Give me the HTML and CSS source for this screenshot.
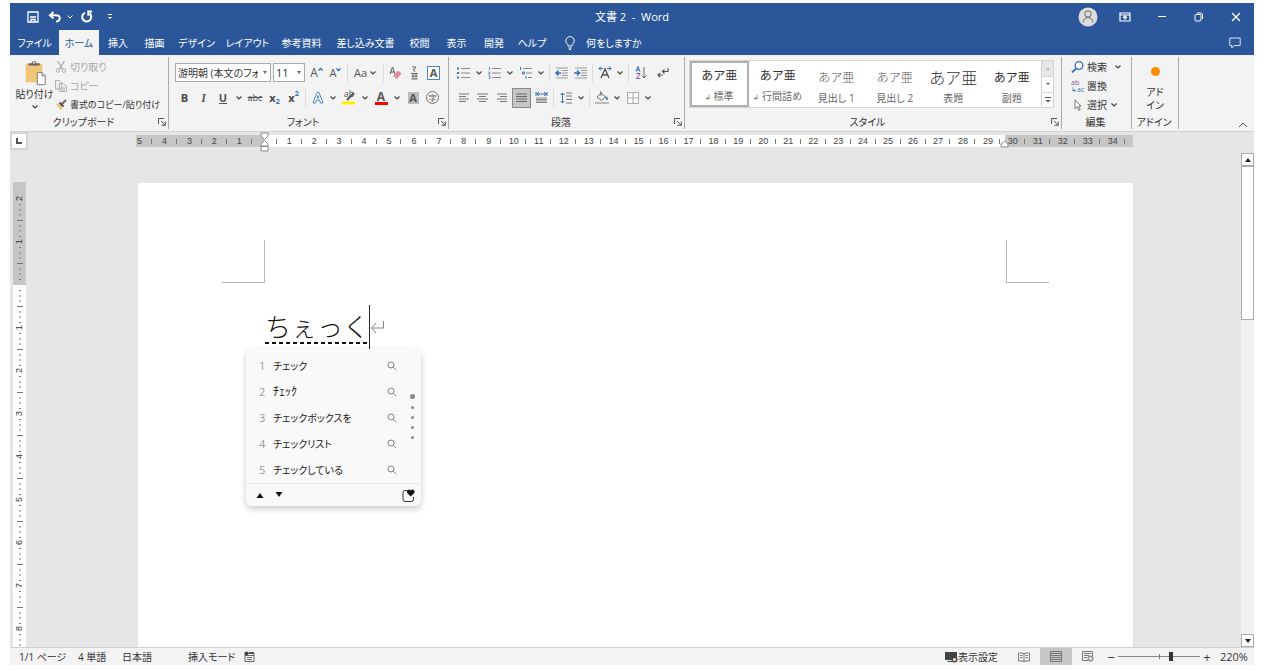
FILE: index.html
```html
<!DOCTYPE html>
<html lang="ja">
<head>
<meta charset="utf-8">
<meta name="viewport" content="width=device-width, initial-scale=1">
<title>文書 2 - Word</title>
<link rel="stylesheet" href="styles.css">
</head>
<body>
<svg class="defs" aria-hidden="true">
  <symbol id="chev" viewBox="0 0 8 8"><path d="M1.500 2.500 4 5l2.500-2.500" fill="none" stroke="#444" stroke-width="1.200"/></symbol>
  <symbol id="launch" viewBox="0 0 8 8"><path d="M.5 6V.5H6M3 3l4 4M7.300 3.500v3.800H3.500" fill="none" stroke="#555"/></symbol>
  <symbol id="mag" viewBox="0 0 10 10"><circle cx="4" cy="4" r="3" fill="none" stroke="#858585"/><path d="M6.200 6.200 9.300 9.300" stroke="#858585"/></symbol>
</svg>
<div class="window">
  <header class="titlebar">
    <div class="quick">
      <button aria-label="保存"><svg width="12" height="12" viewBox="0 0 12 12"><path d="M1 1h10v10H1z" fill="none" stroke="#fff" stroke-width="1.300"/><path d="M3 6h6M4 11V8.500h4V11" fill="none" stroke="#fff" stroke-width="1.300"/></svg></button>
      <button aria-label="元に戻す"><svg width="14" height="12" viewBox="0 0 14 12"><path d="M5.500 1 2 4.200l3.500 3.200M2.500 4.200H8c5 0 5 6.300 0 6.300" fill="none" stroke="#fff" stroke-width="2"/></svg></button>
      <button class="narrow" aria-label="元に戻す一覧"><svg width="8" height="8" viewBox="0 0 8 8"><path d="m1.500 2.500 2.500 2.500 2.500-2.500" fill="none" stroke="#fff"/></svg></button>
      <button class="redo" aria-label="繰り返し"><svg width="14" height="14" viewBox="0 0 14 14"><path d="M5 2.800A4.500 4.500 0 1 0 9.500 3.400M12 1.500H8.300v4.200" fill="none" stroke="#fff" stroke-width="2"/></svg></button>
      <button class="more" aria-label="クイック アクセス ツール バーのカスタマイズ"><svg width="6" height="6" viewBox="0 0 6 6"><path d="M1 .5h4" stroke="#fff"/><path d="M1 3h4L3 5z" fill="#fff"/></svg></button>
    </div>
    <h1 class="title">文書 2 &nbsp;-&nbsp; Word</h1>
    <div class="wincontrols">
      <button class="avatar" aria-label="アカウント"><svg width="20" height="20" viewBox="0 0 20 20"><circle cx="10" cy="10" r="9.500" fill="#dcdcdc"/><circle cx="10" cy="7" r="3.200" fill="none" stroke="#666"/><path d="M5 15.500c.5-6.500 9.500-6.500 10 0" fill="none" stroke="#666"/></svg></button>
      <button aria-label="リボンの表示オプション"><svg width="12" height="10" viewBox="0 0 12 10"><path d="M1 1h10v8H1zM1 3h10M6 8V4.500M4 6l2-2 2 2" fill="none" stroke="#fff" stroke-width="1.200"/></svg></button>
      <button aria-label="最小化"><svg width="10" height="10"><path d="M1 4.500h8" stroke="#fff"/></svg></button>
      <button aria-label="元のサイズに戻す"><svg width="10" height="10" viewBox="0 0 10 10"><rect x="1" y="2.500" width="6" height="6.500" rx="1" fill="none" stroke="#fff"/><path d="M3 1h3.500Q8.500 1 8.500 3v4" fill="none" stroke="#fff"/></svg></button>
      <button aria-label="閉じる"><svg width="10" height="10"><path d="m1 1 8 8M9 1 1 9" stroke="#fff" stroke-width="1.200"/></svg></button>
    </div>
  </header>
  <nav class="tabs">
    <div class="tablist">
      <button>ファイル</button><button class="active">ホーム</button><button>挿入</button><button>描画</button><button>デザイン</button><button>レイアウト</button><button>参考資料</button><button>差し込み文書</button><button>校閲</button><button>表示</button><button>開発</button><button>ヘルプ</button>
    </div>
    <button class="tell"><svg width="10" height="14" viewBox="0 0 10 14"><path d="M3.200 10c0-2-2.400-2.500-2.400-5.200a4.200 4.200 0 0 1 8.400 0C9.200 7.500 6.800 8 6.800 10zM3.300 12h3.400M4 13.500h2" fill="none" stroke="#fff"/></svg>何をしますか</button>
    <button class="comment" aria-label="コメント"><svg width="12" height="12" viewBox="0 0 12 12"><path d="M.8 1h10.400v7.500H5L2.800 11V8.500h-2z" fill="none" stroke="#d7e3f5"/></svg></button>
  </nav>

  <div class="ribbon">
    <section class="group clip">
      <div class="body clipbody">
        <button class="paste"><svg width="24" height="26" viewBox="0 0 24 28"><rect x="2" y="4" width="18" height="20" fill="#efc578"/><path d="M5 6V3.500h3.500Q9 1 11 1t2.500 2.500H17V6z" fill="#666"/><circle cx="11" cy="3" r="1" fill="#fff"/><path d="M14.500 13.500h5L23 17v9.500h-8.500z" fill="#fff" stroke="#777"/><path d="M19.500 13.500V17H23" fill="none" stroke="#777"/></svg><span>貼り付け</span><svg width="8" height="8"><use href="#chev"/></svg></button>
        <div class="stack">
          <button class="off"><svg width="12" height="12" viewBox="0 0 12 12"><path d="m2.500 0 5 8M9.500 0l-5 8" stroke="#aaa" stroke-width="1.300"/><circle cx="3" cy="9.500" r="1.800" fill="none" stroke="#aaa"/><circle cx="9" cy="9.500" r="1.800" fill="none" stroke="#aaa"/></svg>切り取り</button>
          <button class="off"><svg width="12" height="12" viewBox="0 0 12 12"><path d="M.5.500h4l2 2v6.500h-6zM4.500 3.500h4l3 3v5h-7z" fill="#eee" stroke="#b0b0b0"/><path d="M6 8h4M6 10h4" stroke="#b0b0b0"/></svg>コピー</button>
          <button class="long"><svg width="12" height="12" viewBox="0 0 12 12"><path d="m1 5 4-1 3 3-2 4.500z" fill="#efc578"/><path d="m4.500 3.500 4 4" stroke="#555" stroke-width="2"/><path d="m7 5 4-4" stroke="#666" stroke-width="2"/></svg>書式のコピー/貼り付け</button>
        </div>
      </div>
      <footer><span>クリップボード</span><button aria-label="クリップボードの詳細"><svg width="8" height="8"><use href="#launch"/></svg></button></footer>
    </section>

    <section class="group font">
      <div class="body">
        <div class="row">
          <label class="combo face"><select aria-label="フォント"><option>游明朝 (本文のフォント)</option></select><i></i></label>
          <label class="combo size"><select aria-label="フォント サイズ"><option>11</option></select><i></i></label>
          <button class="t big" aria-label="フォント サイズの拡大">A<svg width="5" height="12" viewBox="0 0 5 12"><path d="m.5 3.500 2-2 2 2" fill="none" stroke="#2f6db5" stroke-width="1.300"/></svg></button><button class="t" aria-label="フォント サイズの縮小">A<svg width="5" height="12" viewBox="0 0 5 12"><path d="m.5 1.500 2 2 2-2" fill="none" stroke="#2f6db5" stroke-width="1.300"/></svg></button><hr>
          <button class="t wide">Aa<svg width="8" height="8"><use href="#chev"/></svg></button><hr>
          <button aria-label="書式のクリア"><svg width="13" height="14" viewBox="0 0 13 14"><path d="m1 8 2.500-7L6 8M2 6h3" fill="none" stroke="#555"/><path d="m4 10 5-5.500 3.500 3L8 13z" fill="#e58a98"/></svg></button>
          <button aria-label="ルビ"><svg width="9" height="14" viewBox="0 0 9 14"><path d="M2 1h4L4 4M3 3l2 3M1 7.500h7M1.500 13h6M3 7.500V13M6 7.500V13M1.500 10h6" fill="none" stroke="#666"/></svg></button>
          <button class="t"><span class="boxed">A</span></button>
        </div>
        <div class="row">
          <button class="t b">B</button><button class="t it">I</button><button class="t un">U</button><button class="dd" aria-label="下線の種類"><svg width="8" height="8"><use href="#chev"/></svg></button>
          <button class="t strike">abc</button><button class="t b">x<sub>2</sub></button><button class="t b">x<sup>2</sup></button><hr>
          <button aria-label="文字の効果"><svg width="12" height="14" viewBox="0 0 12 14"><path d="M1 12 5 1.500h2L11 12H8.500l-1-3h-3l-1 3zM5.200 7h1.600L6 4.500z" fill="#fff" stroke="#4a86c8"/></svg></button><button class="dd" aria-label="文字の効果一覧"><svg width="8" height="8"><use href="#chev"/></svg></button>
          <button class="t mark" aria-label="蛍光ペン">ab<svg width="13" height="14" viewBox="0 0 13 14"><path d="m5 9 7-7" stroke="#555" stroke-width="2"/><path d="M0 10.500h13v3H0z" fill="#fff000"/></svg></button><button class="dd" aria-label="蛍光ペンの色"><svg width="8" height="8"><use href="#chev"/></svg></button>
          <button class="t roomy"><span class="red">A</span></button><button class="dd" aria-label="フォントの色"><svg width="8" height="8"><use href="#chev"/></svg></button>
          <button class="t roomy"><span class="shade">A</span></button><button class="t"><span class="ring">字</span></button>
        </div>
      </div>
      <footer><span>フォント</span><button aria-label="フォントの詳細"><svg width="8" height="8"><use href="#launch"/></svg></button></footer>
    </section>

    <section class="group para">
      <div class="body">
        <div class="row">
          <button aria-label="箇条書き"><svg width="13" height="12" viewBox="0 0 13 12"><path d="M4 1.500h9M4 6h9M4 10.500h9" stroke="#888"/><path d="M0 1.500h2M0 6h2M0 10.500h2" stroke="#3f74b5" stroke-width="2"/></svg></button><button class="dd" aria-label="箇条書き一覧"><svg width="8" height="8"><use href="#chev"/></svg></button>
          <button aria-label="段落番号"><svg width="13" height="12" viewBox="0 0 13 12"><path d="M4 1.500h9M4 6h9M4 10.500h9" stroke="#888"/><path d="M1.500 0v3M.5 5h1.500L.5 7H2.500M.5 9h1.500v3H.5" fill="none" stroke="#3f74b5" stroke-width=".8"/></svg></button><button class="dd" aria-label="段落番号一覧"><svg width="8" height="8"><use href="#chev"/></svg></button>
          <button aria-label="アウトライン"><svg width="13" height="12" viewBox="0 0 13 12"><path d="M4 1.500h9M7 6h6M9 10.500h4" stroke="#888"/><path d="M1.500 0v3M3.500 5h2v2h-2zM7 9v3" fill="none" stroke="#3f74b5"/></svg></button><button class="dd" aria-label="アウトライン一覧"><svg width="8" height="8"><use href="#chev"/></svg></button><hr>
          <button aria-label="インデントを減らす"><svg width="13" height="12" viewBox="0 0 13 12"><path d="M1 1h12M7 3.500h6M7 6h6M7 8.500h6M1 11h12" stroke="#999"/><path d="M6 6H1.500M3.500 3.500 1 6l2.500 2.500" fill="none" stroke="#2f6db5" stroke-width="1.500"/></svg></button>
          <button aria-label="インデントを増やす"><svg width="13" height="12" viewBox="0 0 13 12"><path d="M1 1h12M7 3.500h6M7 6h6M7 8.500h6M1 11h12" stroke="#999"/><path d="M0 6h5M3 3.500 5.500 6 3 8.500" fill="none" stroke="#2f6db5" stroke-width="1.500"/></svg></button><hr>
          <button aria-label="拡張書式"><svg width="14" height="13" viewBox="0 0 14 13"><path d="m3 12 4-9 4 9M4.500 9h5" fill="none" stroke="#555" stroke-width="1.400"/><path d="M1 2.500h4M3 .5l-2 2 2 2M9 2.500h4M11 .5l2 2-2 2" fill="none" stroke="#2f6db5"/></svg></button><button class="dd" aria-label="拡張書式一覧"><svg width="8" height="8"><use href="#chev"/></svg></button><hr>
          <button aria-label="並べ替え"><svg width="12" height="13" viewBox="0 0 12 13"><path d="m1 5.500 2-5 2 5M2 4h2" fill="none" stroke="#2f6db5"/><path d="M1.300 7.500h4l-4 5h4" fill="none" stroke="#8b52a8"/><path d="M9 1v11M6.800 9.500 9 12l2.200-2.500" fill="none" stroke="#666"/></svg></button>
          <button class="wide" aria-label="編集記号の表示"><svg width="12" height="12" viewBox="0 0 12 12"><path d="M11 1v3.500H6M7.500 2.500l-2 2 2 2M6 8H1.500M3 6 1 8l2 2" fill="none" stroke="#555" stroke-width="1.200"/></svg></button>
        </div>
        <div class="row">
          <button aria-label="左揃え"><svg width="11" height="10"><path d="M1 1h10M1 3.500h7M1 6h10M1 8.500h7" stroke="#777"/></svg></button>
          <button aria-label="中央揃え"><svg width="11" height="10"><path d="M0 1h11M2 3.500h7M0 6h11M2 8.500h7" stroke="#777"/></svg></button>
          <button class="roomy" aria-label="右揃え"><svg width="11" height="10"><path d="M0 1h10M3 3.500h7M0 6h10M3 8.500h7" stroke="#777"/></svg></button>
          <button class="on" aria-label="両端揃え"><svg width="11" height="10"><path d="M0 1h11M0 3.500h11M0 6h11M0 8.500h11" stroke="#666"/></svg></button>
          <button class="roomy" aria-label="均等割り付け"><svg width="13" height="13" viewBox="0 0 13 13"><path d="M1 1v4M12 1v4M1.500 3h10M4 1 1.800 3 4 5M9 1l2.200 2L9 5" fill="none" stroke="#2f6db5"/><path d="M1 7h11M1 8.500h11M1 10h11M1 11.500h11" stroke="#888"/></svg></button><hr>
          <button aria-label="行間"><svg width="12" height="12" viewBox="0 0 12 12"><path d="M6 1h6M6 4h6M6 7.500h6M6 11h6" stroke="#777"/><path d="M2.500 1v10M.5 3l2-2 2 2M.5 9l2 2 2-2" fill="none" stroke="#2f6db5"/></svg></button><button class="dd" aria-label="行間一覧"><svg width="8" height="8"><use href="#chev"/></svg></button><hr>
          <button aria-label="塗りつぶし"><svg width="14" height="13" viewBox="0 0 14 13"><path d="m2 6 4-4 4.500 4L6.500 9.500zM6 5V1q0-1-1-1" fill="#fff" stroke="#666"/><path d="M10.500 6q2 1 1.500 3" fill="none" stroke="#2f6db5" stroke-width="1.500"/><path d="M0 11h14v2H0z" fill="#bbb"/></svg></button><button class="dd" aria-label="塗りつぶしの色"><svg width="8" height="8"><use href="#chev"/></svg></button>
          <button aria-label="罫線"><svg width="12" height="12"><path d="M.5.500h11v11H.5zM6 1v10M1 6h10" fill="#fff" stroke="#aaa"/></svg></button><button class="dd" aria-label="罫線一覧"><svg width="8" height="8"><use href="#chev"/></svg></button>
        </div>
      </div>
      <footer><span>段落</span><button aria-label="段落の詳細"><svg width="8" height="8"><use href="#launch"/></svg></button></footer>
    </section>

    <section class="group styles">
      <div class="body">
        <div class="gallery">
          <button class="sel"><b>あア亜</b><span><small>↲</small> 標準</span></button>
          <button><b>あア亜</b><span><small>↲</small> 行間詰め</span></button>
          <button class="light"><b>あア亜</b><span>見出し 1</span></button>
          <button class="light"><b>あア亜</b><span>見出し 2</span></button>
          <button class="large"><b>あア亜</b><span>表題</span></button>
          <button><b>あア亜</b><span>副題</span></button>
          <div class="updown">
            <button class="dim" aria-label="上へ"><svg width="6" height="6"><path d="M1 4h4L3 2z" fill="#aaa"/></svg></button>
            <button aria-label="下へ"><svg width="6" height="6"><path d="M1 2h4L3 4z" fill="#555"/></svg></button>
            <button aria-label="その他"><svg width="8" height="8"><path d="M1 1.500h6" stroke="#555"/><path d="M1.500 4h5L4 6.500z" fill="#555"/></svg></button>
          </div>
        </div>
      </div>
      <footer><span>スタイル</span><button aria-label="スタイルの詳細"><svg width="8" height="8"><use href="#launch"/></svg></button></footer>
    </section>

    <section class="group edit">
      <div class="body stack">
        <button><svg width="13" height="12" viewBox="0 0 13 12"><circle cx="8" cy="4.500" r="3.800" fill="#fff" stroke="#2f6db5" stroke-width="1.300"/><path d="M5.300 7.300 1 11.500" stroke="#2f6db5" stroke-width="1.800"/></svg>検索<svg class="far" width="8" height="8"><use href="#chev"/></svg></button>
        <button><span class="abac"><em>ab</em><em>↳ac</em></span>置換</button>
        <button><svg width="13" height="12" viewBox="0 0 13 12"><path d="M4 .8v9l2-2 1.700 3.500 1.500-.8L7.600 7.200H10z" fill="#fff" stroke="#777"/></svg>選択<svg width="8" height="8"><use href="#chev"/></svg></button>
      </div>
      <footer><span>編集</span></footer>
    </section>

    <section class="group addin">
      <div class="body"><button><i class="dot"></i>アド<br>イン</button></div>
      <footer><span>アドイン</span></footer>
    </section>
    <div class="tail"><button aria-label="リボンを折りたたむ"><svg width="10" height="6"><path d="m1 5 4-4 4 4" fill="none" stroke="#555"/></svg></button></div>
  </div>

  <main class="work">
    <div class="toprow">
      <button class="tabstop" aria-label="左揃えタブ"><svg width="6" height="6"><path d="M1 0v5h5" fill="none" stroke="#555" stroke-width="2"/></svg></button>
      <div class="hruler">
        <span>5</span><span>4</span><span>3</span><span>2</span><span>1</span><span></span><span>1</span><span>2</span><span>3</span><span>4</span><span>5</span><span>6</span><span>7</span><span>8</span><span>9</span><span>10</span><span>11</span><span>12</span><span>13</span><span>14</span><span>15</span><span>16</span><span>17</span><span>18</span><span>19</span><span>20</span><span>21</span><span>22</span><span>23</span><span>24</span><span>25</span><span>26</span><span>27</span><span>28</span><span>29</span><span>30</span><span>31</span><span>32</span><span>33</span><span>34</span>
        <svg class="indent left" width="9" height="20" viewBox="0 0 9 20"><path d="M1 1h7v3L4.500 7.500 1 4zM1 14v-2.500l3.500-3 3.500 3V14zM1 14.500h7v4.500H1z" fill="#fff" stroke="#888"/></svg>
        <svg class="indent right" width="9" height="8" viewBox="0 0 9 8"><path d="M1 7V4l3.500-3L8 4v3z" fill="#fff" stroke="#888"/></svg>
      </div>
    </div>
    <div class="canvas">
      <div class="vruler">
        <svg class="ticks" aria-hidden="true"><defs><pattern id="vt" width="13" height="43" y="17" patternUnits="userSpaceOnUse"><path d="M6 5.500h2M6 11h2M6 16h2M4 21.500h6M6 27h2M6 32h2M6 37.500h2" stroke="#777"/></pattern></defs><rect y="17" width="13" height="100%" fill="url(#vt)"/></svg>
        <span>2</span><span>1</span><span></span><span>1</span><span>2</span><span>3</span><span>4</span><span>5</span><span>6</span><span>7</span><span>8</span>
      </div>
      <article class="page">
        <i class="corner cl"></i><i class="corner cr"></i>
        <div class="line"><span class="compose">ちぇっく</span><i class="caret"></i><svg width="15" height="16" viewBox="0 0 15 16"><path d="M13.500 2v7H1.500M6 4 1.500 9 6 14" fill="none" stroke="#888"/></svg>
          <div class="ime">
            <ol>
              <li><em>1</em><span>チェック</span><svg width="10" height="10"><use href="#mag"/></svg></li>
              <li><em>2</em><span class="half">ﾁｪｯｸ</span><svg width="10" height="10"><use href="#mag"/></svg></li>
              <li><em>3</em><span>チェックボックスを</span><svg width="10" height="10"><use href="#mag"/></svg></li>
              <li><em>4</em><span>チェックリスト</span><svg width="10" height="10"><use href="#mag"/></svg></li>
              <li><em>5</em><span>チェックしている</span><svg width="10" height="10"><use href="#mag"/></svg></li>
            </ol>
            <div class="pager"><i></i><i></i><i></i><i></i><i></i></div>
            <div class="imefoot">
              <button aria-label="前の候補"><svg width="8" height="6"><path d="M.5 6h7L4 1z" fill="#111"/></svg></button>
              <button aria-label="次の候補"><svg width="8" height="6"><path d="M.5 0h7L4 5z" fill="#111"/></svg></button>
              <button class="heart" aria-label="絵文字"><svg width="13" height="13" viewBox="0 0 13 13"><path d="M5.500 1.500H3Q1 1.500 1 3.500v7q0 2 2 2h6.500q2 0 2-2V8" fill="none" stroke="#333"/><path d="M8.700 7.500 5.300 4C3.800 1.500 7.300-.8 8.700 1.500 10.300-.8 13.700 1.500 12.200 4z" fill="#111"/></svg></button>
            </div>
          </div>
        </div>
      </article>
    </div>
    <div class="scroll">
      <button aria-label="上にスクロール"><svg width="8" height="6"><path d="M1 5h6L4 1z" fill="#222"/></svg></button>
      <div class="track"><div class="thumb"></div></div>
      <button aria-label="下にスクロール"><svg width="8" height="6"><path d="M1 1h6L4 5z" fill="#222"/></svg></button>
    </div>
  </main>

  <footer class="status">
    <span class="s1">1/1 ページ</span><span class="s2">4 単語</span><span class="s3">日本語</span><span class="s4">挿入モード</span>
    <button aria-label="マクロの記録"><svg width="11" height="11" viewBox="0 0 11 11"><path d="M1 2.500h9v8H1zM1 4.500h9M3 6.500h5M3 8.500h5" fill="none" stroke="#666"/><circle cx="2.500" cy="2.500" r="2" fill="#444"/><path d="M5 1h5v2H5z" fill="#555"/></svg></button>
    <button class="disp"><svg width="13" height="12" viewBox="0 0 13 12"><path d="M0 1h12v8H0zM3 10h4v1H2z" fill="#444"/><circle cx="9.500" cy="8.500" r="2.300" fill="#f3f3f3" stroke="#444" stroke-width="1.500"/></svg>表示設定</button>
    <button class="view" aria-label="閲覧モード"><svg width="12" height="10" viewBox="0 0 12 10"><path d="M.5 1H5l1 1 1-1h4.500v8H7l-1 1-1-1H.5zM6 2v8M2 3.500h2.500M2 5.500h2.500M7.500 3.500H10M7.500 5.500H10" fill="none" stroke="#777"/></svg></button>
    <button class="view cur" aria-label="印刷レイアウト"><svg width="12" height="11"><path d="M.5.500h11v10H.5zM1 2.500h10M1 4.500h10M1 6.500h10M1 8.500h10" fill="none" stroke="#777"/></svg></button>
    <button class="view" aria-label="Web レイアウト"><svg width="12" height="11" viewBox="0 0 12 11"><path d="M6 9.500H.5v-9h10V5M2 2.500h7M2 4.500h5M2 6.500h3" fill="none" stroke="#777"/><circle cx="8.500" cy="7.500" r="2.500" fill="#ddd" stroke="#666"/></svg></button>
    <button class="pm" aria-label="縮小">−</button>
    <input type="range" min="0" max="100" value="66" aria-label="ズーム">
    <button class="pm" aria-label="拡大">+</button>
    <span class="pct">220%</span>
  </footer>
</div>
</body>
</html>
```
FILE: styles.css
```css
* { box-sizing: border-box; }
body {
  margin: 0;
  padding: 3px 10px 6px;
  height: 100vh;
  background: #fff;
  color: #333;
  font-family: "Open Sans", "Noto Sans CJK JP", sans-serif;
  font-size: 10px;
  line-height: 14px;
  font-feature-settings: "palt";
}
button, select, input { font: inherit; font-feature-settings: inherit; color: inherit; margin: 0; }
button {
  display: flex;
  align-items: center;
  justify-content: center;
  padding: 0;
  border: 0;
  background: none;
  white-space: nowrap;
}
svg { display: block; flex: none; }
i, em { font-style: normal; }
.defs { position: absolute; width: 0; height: 0; }
.window { height: 100%; display: flex; flex-direction: column; overflow: hidden; }

.titlebar {
  flex: none;
  display: grid;
  grid-template-columns: 1fr auto 1fr;
  align-items: center;
  height: 27px;
  background: #2b579a;
  color: #fff;
}
.quick { display: flex; align-items: center; padding-left: 12px; }
.quick button { width: 22px; height: 20px; }
.quick .narrow { width: 8px; }
.quick .redo { width: 26px; }
.quick .more { width: 20px; }
.title { margin: 0; font-size: 11px; font-weight: 400; }
.wincontrols { display: flex; justify-content: flex-end; align-items: center; }
.wincontrols button { width: 37px; height: 24px; }

.tabs { flex: none; display: flex; height: 25px; background: #2b579a; color: #fff; }
.tablist { display: grid; grid-template-columns: 49px 40px 38px 35px 49px 53px 55px 73px 35px 39px 36px 40px; }
.tablist .active { background: #f3f3f3; color: #2b579a; }
.tell { gap: 11px; padding-left: 13px; }
.comment { margin-left: auto; width: 38px; }

.ribbon {
  flex: none;
  display: flex;
  height: 77px;
  background: #f3f3f3;
  border-bottom: 1px solid #d2d2d2;
}
.group {
  flex: none;
  display: flex;
  flex-direction: column;
  margin: 2px 0;
  border-right: 1px solid #aaa;
}
.group .body { flex: 1; padding-top: 3px; }
.group footer { display: flex; align-items: center; height: 14px; padding-right: 2px; }
.group footer span { flex: 1; text-align: center; }
.group footer button { width: 9px; }
.clip { width: 159px; }
.font { width: 280px; }
.font .body { padding-left: 6px; }
.para { width: 236px; }
.para .body { padding-left: 5px; }
.styles { flex: 1; min-width: 377px; }
.edit { width: 70px; }
.addin { width: 47px; }
.tail { width: 76px; display: flex; align-items: flex-end; justify-content: flex-end; padding: 3px 6px; }

.clipbody { display: flex; }
.paste { flex-direction: column; width: 45px; padding-left: 4px; justify-content: flex-start; }
.paste span { margin: 1px 0 2px; }
.stack { display: flex; flex-direction: column; align-items: flex-start; }
.stack button { height: 19px; gap: 3px; }
.group .stack.body, .group .clipbody { padding-top: 0; }
.clipbody .paste { padding-top: 3px; }
.off { color: #aaa; }
.long { font-size: 9px; }

.row { display: flex; align-items: center; height: 25px; }
.row button { width: 19px; height: 20px; flex: none; }
.row .dd { width: 12px; }
.row .roomy, .row .un, .row .strike, .row .mark { width: 20px; }
.row .wide { width: 31px; gap: 2px; }
.para .row .wide { width: 26px; }
.row hr { width: 1px; height: 18px; margin: 0 2px; border: 0; background: #dcdcdc; }
.combo { position: relative; display: block; height: 19px; margin-right: 2px; }
.face { width: 96px; }
.size { width: 32px; }
.combo select {
  width: 100%;
  height: 100%;
  padding: 0 12px 0 2px;
  appearance: none;
  border: 1px solid #ababab;
  border-radius: 0;
  background: #fff;
}
.size select { font-size: 11px; }
.combo i {
  position: absolute;
  right: 4px;
  top: 8px;
  border: 2px solid transparent;
  border-top: 3px solid #666;
  border-bottom: 0;
}
.t { font-size: 11px; color: #555; }
.t.big { font-size: 12px; }
.t sup, .t sub { font-size: 7px; line-height: 8px; color: #2f6db5; vertical-align: baseline; }
.t sup { align-self: flex-start; margin-top: 2px; }
.t sub { align-self: flex-end; margin-bottom: 2px; }
.b { font-weight: 700; color: #444; }
.it { font-family: "Liberation Serif", serif; font-style: italic; font-weight: 700; font-size: 12px; }
.un { text-decoration: underline; font-weight: 700; }
.strike { text-decoration: line-through; font-size: 9px; }
.boxed { width: 13px; border: 1px solid #4a86c8; background: #fff; font-weight: 700; line-height: 12px; }
.mark { position: relative; font-size: 9px; line-height: 10px; }
.row .mark { padding-bottom: 8px; }
.mark svg { position: absolute; left: 3px; top: 3px; }
.red { border-bottom: 3px solid #f00; width: 13px; font-size: 12px; line-height: 11px; font-weight: 700; }
.shade { width: 11px; background: #bbb; font-weight: 700; line-height: 12px; }
.ring { width: 13px; height: 13px; border: 1px solid #777; border-radius: 50%; font-size: 8px; line-height: 11px; }
.row .on { background: #c6c6c6; border: 1px solid #8a8a8a; }

.styles .body { padding: 3px 7px 0 4px; }
.gallery {
  display: grid;
  grid-template-columns: repeat(6, 1fr) 12px;
  height: 48px;
  border: 1px solid #d4d4d4;
  background: #fff;
}
.gallery > button { flex-direction: column; justify-content: flex-end; gap: 5px; padding-bottom: 2px; color: #666; }
.gallery b { font-weight: 400; font-size: 12px; line-height: 16px; color: #333; font-feature-settings: normal; }
.gallery small { font-size: 7px; }
.gallery .sel { border: 2px solid #b0b0b0; padding-bottom: 0; }
.gallery .light b { font-weight: 300; color: #555; }
.gallery .large b { font-weight: 300; font-size: 16px; }
.updown { display: grid; grid-template-rows: repeat(3, 1fr); border-left: 1px solid #d4d4d4; }
.updown button + button { border-top: 1px solid #d4d4d4; }
.updown .dim { background: #e6e6e6; }

.edit .body { padding-left: 9px; }
.edit .far { margin-left: 4px; }
.abac { width: 13px; font-size: 7px; line-height: 7px; text-align: left; }
.abac em { display: block; color: #8b52a8; }
.abac em + em { color: #2f6db5; }
.addin .body button { display: block; width: 100%; line-height: 13px; }
.dot { display: block; width: 9px; height: 9px; margin: 7px auto 10px; border-radius: 50%; background: #ff8c00; }

.work {
  flex: 1;
  min-height: 0;
  display: grid;
  grid-template-columns: 1fr 13px;
  grid-template-rows: 21px 1fr;
  background: #e6e6e6;
}
.toprow { grid-column: 1 / 3; display: flex; }
.tabstop { width: 18px; height: 18px; border: 2px solid #d4d4d4; background: #fff; flex: none; }
.hruler {
  position: relative;
  flex: 1;
  display: flex;
  height: 12px;
  margin: 3px 121px 0 99px;
  padding-right: 8px;
  background: linear-gradient(90deg, transparent 9px, #c6c6c6 9px 137px, #fff 137px calc(100% - 128px), #c6c6c6 calc(100% - 128px));
  font: 9px/13px "Liberation Sans", sans-serif;
  color: #444;
}
.hruler span {
  flex: 1;
  text-align: center;
  background: linear-gradient(#777, #777) right center / 1px 5px no-repeat;
}
.indent { position: absolute; }
.indent.left { left: 133px; top: -3px; }
.indent.right { right: 124px; top: 5px; }

.canvas { display: flex; padding: 29px 108px 0 3px; min-height: 0; overflow: hidden; }
.vruler {
  position: relative;
  flex: none;
  width: 13px;
  overflow: hidden;
  padding-top: 6px;
  margin-right: 112px;
  background: linear-gradient(#c6c6c6 103px, #fff 103px);
  font: 9px/13px "Liberation Sans", sans-serif;
}
.vruler span {
  display: block;
  height: 43px;
  width: 13px;
  padding-bottom: 8px;
  writing-mode: vertical-rl;
  transform: rotate(180deg);
  text-align: right;
}
.ticks { position: absolute; left: 0; top: 0; width: 13px; height: 100%; }
.page { position: relative; flex: 1; margin-top: 1px; background: #fff; padding: 121px 0 0 127px; }
.corner { position: absolute; top: 57px; width: 43px; height: 43px; border-bottom: 1px solid #b5b5b5; }
.cl { left: 84px; border-right: 1px solid #b5b5b5; }
.cr { right: 84px; border-left: 1px solid #b5b5b5; }
.line { position: relative; display: flex; align-items: center; height: 45px; }
.compose {
  height: 35px;
  width: 104px;
  font: 300 26px/34px "Noto Sans CJK JP", sans-serif;
  font-feature-settings: normal;
  color: #111;
  background: repeating-linear-gradient(90deg, #111 0 4px, transparent 4px 7px) left bottom / 100% 2px no-repeat;
}
.caret { width: 1px; height: 44px; background: #222; }

.ime {
  position: absolute;
  left: -19px;
  top: 45px;
  width: 175px;
  border-radius: 6px;
  background: #f9f9f9;
  box-shadow: 0 3px 7px #0003;
}
.ime ol { list-style: none; margin: 0; padding: 4px 24px 0 13px; }
.ime li { display: flex; align-items: center; height: 26px; }
.ime em { width: 14px; color: #999; font-size: 11px; }
.ime li span { flex: 1; color: #222; }
.ime .half { font-size: 12px; }
.pager { position: absolute; right: 6px; top: 45px; display: flex; flex-direction: column; align-items: center; gap: 7px; }
.pager i { width: 3px; height: 3px; border-radius: 50%; background: #888; }
.pager i:first-child { width: 5px; height: 5px; }
.imefoot { display: flex; height: 23px; border-top: 1px solid #eaeaea; padding: 0 6px 0 10px; gap: 11px; }
.heart { margin-left: auto; }

.scroll { display: flex; flex-direction: column; background: #f1f1f1; }
.scroll button { height: 13px; border: 1px solid #ababab; background: #fff; }
.track { flex: 1; }
.thumb { height: 33%; border: 1px solid #ababab; background: #fff; }

.status { flex: none; display: flex; align-items: center; height: 18px; background: #f3f3f3; border-top: 1px solid #d0d0d0; }
.status span { white-space: nowrap; }
.s1 { width: 68px; padding-left: 9px; }
.s2 { width: 44px; }
.s3 { width: 66px; }
.s4 { width: 56px; }
.disp { margin-left: auto; margin-right: 10px; }
.view { width: 32px; height: 17px; }
.cur { background: #c6c6c6; }
.pm { width: 14px; font-size: 13px; }
.status .pct { width: 40px; padding-left: 6px; font-size: 11px; }
.status input {
  width: 82px;
  height: 14px;
  appearance: none;
  background: linear-gradient(#777, #777) 50% 50% / 1px 5px no-repeat, linear-gradient(#888, #888) center / 100% 1px no-repeat;
}
.status input::-webkit-slider-thumb { appearance: none; width: 4px; height: 9px; background: #333; }
```
